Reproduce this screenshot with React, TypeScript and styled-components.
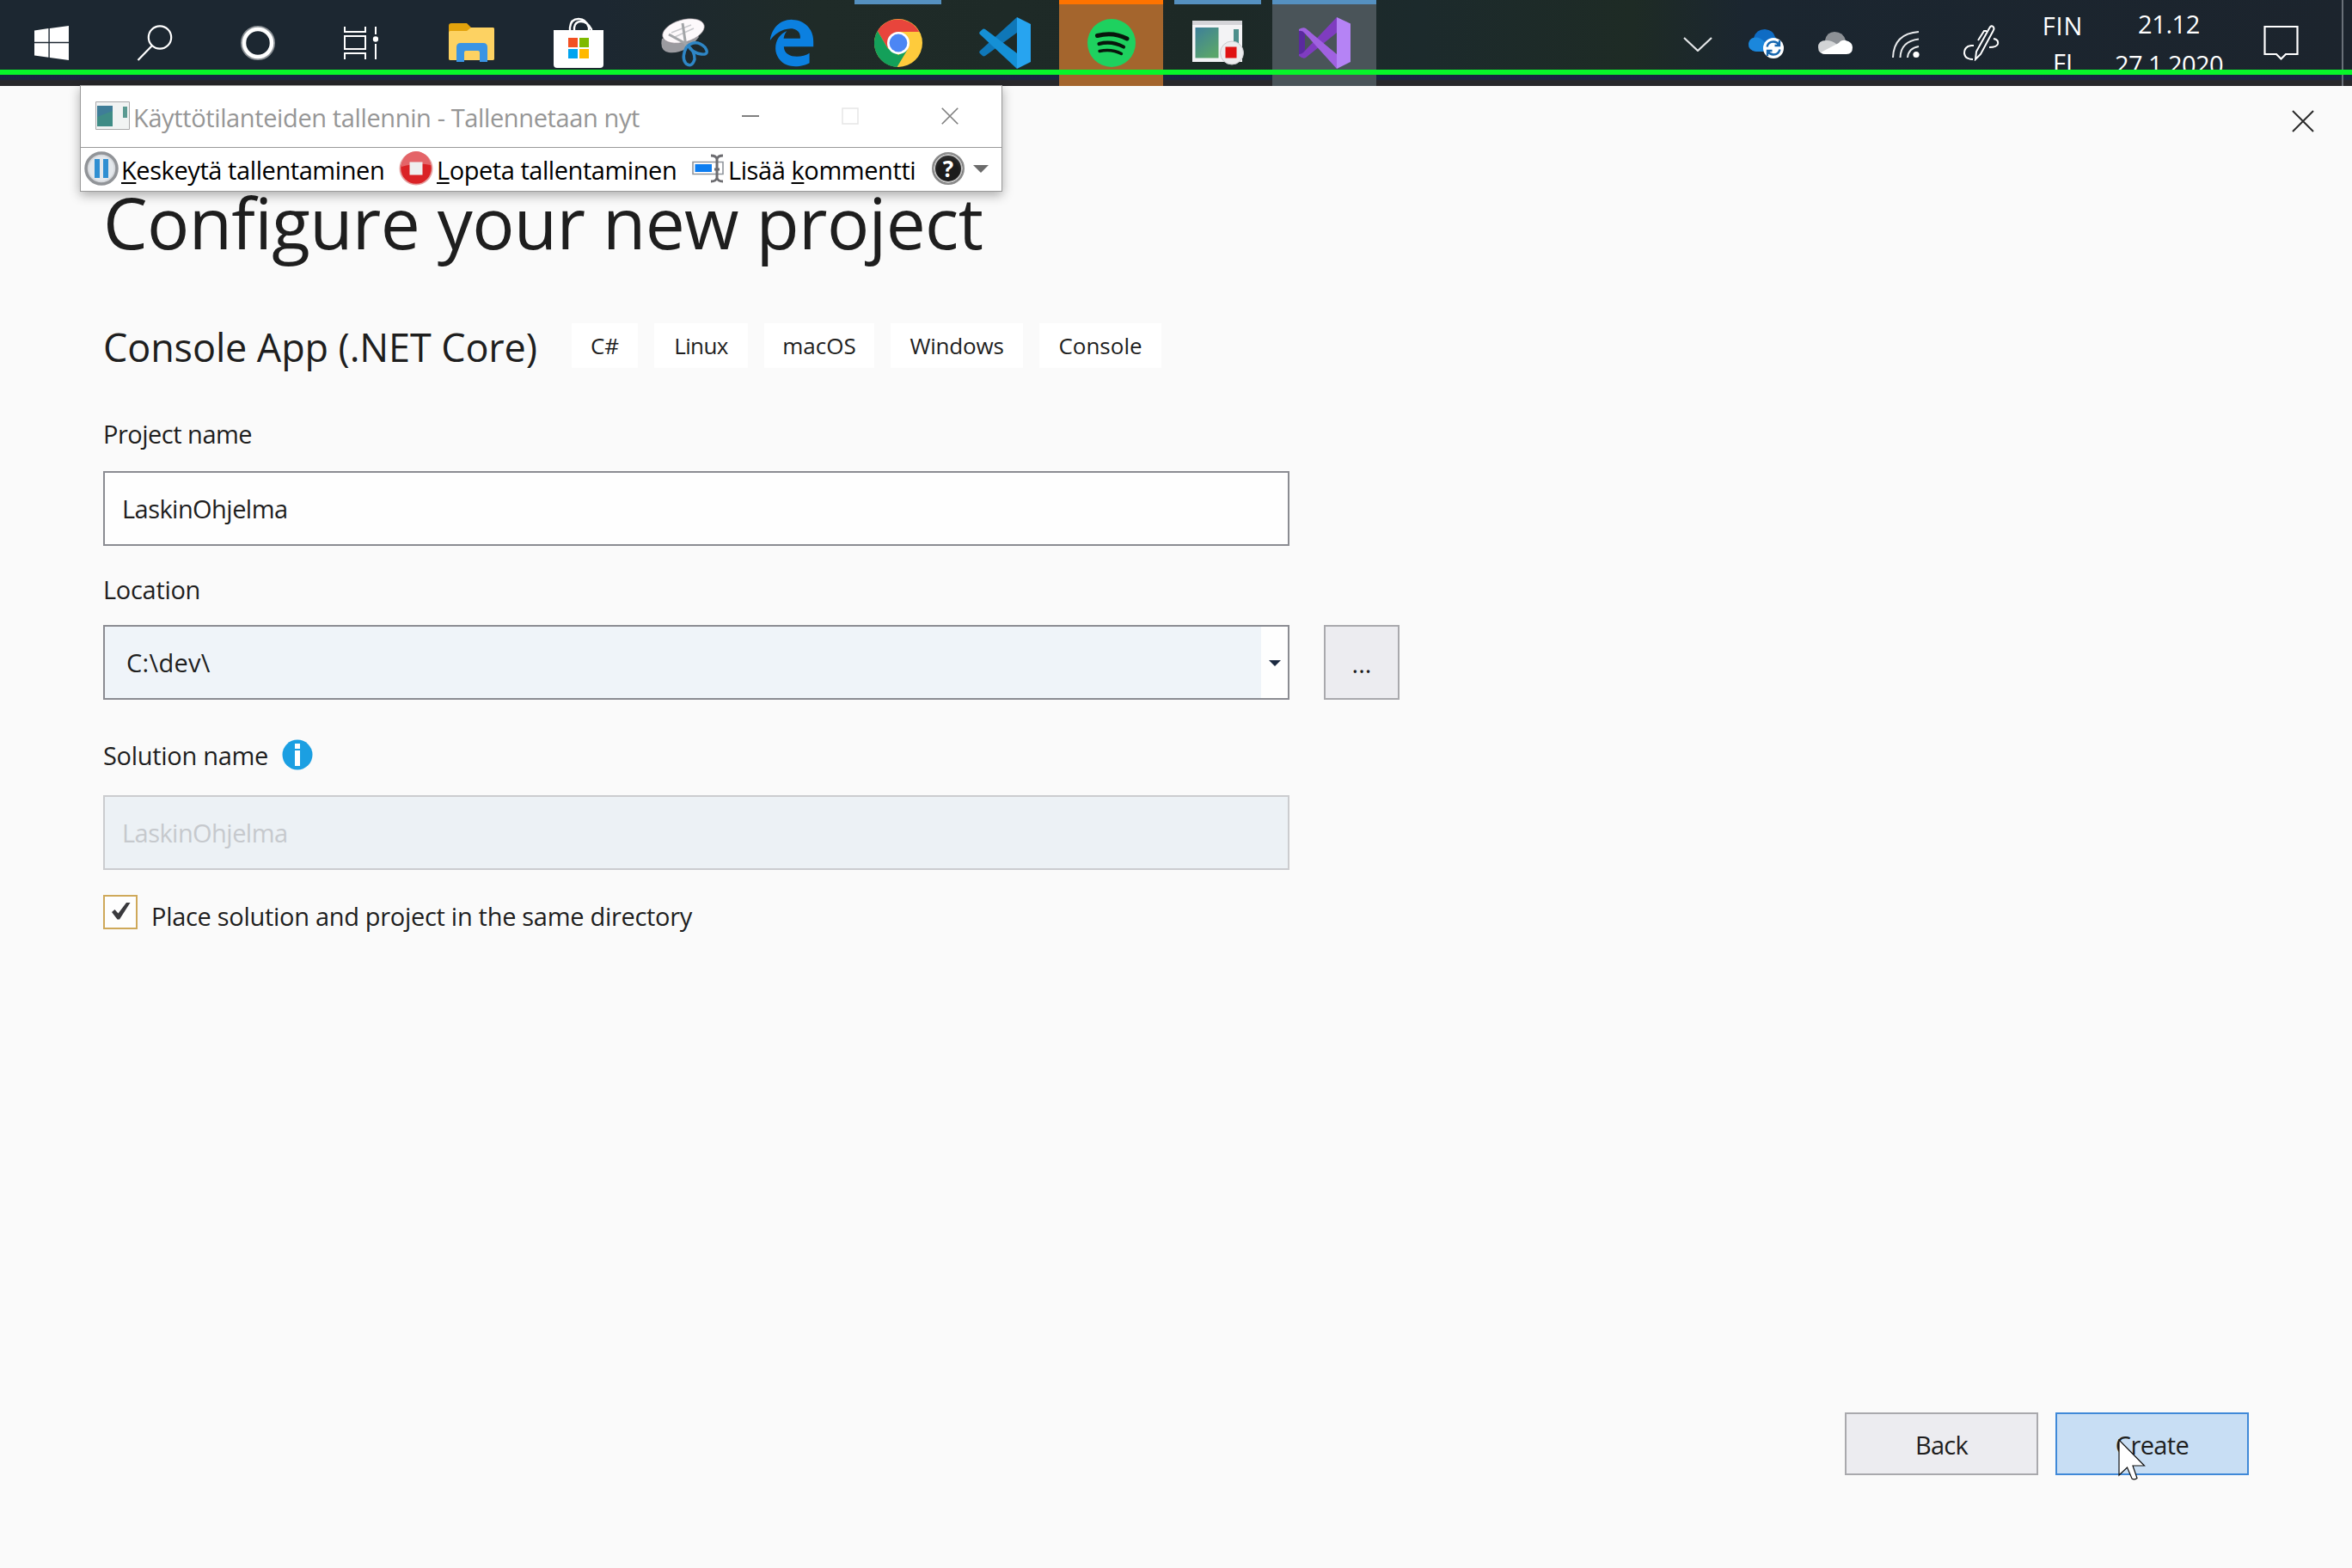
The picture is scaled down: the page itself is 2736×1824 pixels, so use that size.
import React from "react";
import styled, { createGlobalStyle } from "styled-components";
import { FaEdgeLegacy } from "react-icons/fa";

const Global = createGlobalStyle`
  * { box-sizing: border-box; }
  body { margin: 0; background: #fafafa; font-family: "Open Sans", "Noto Sans", sans-serif; }
  svg { display: block; flex: none; }
`;

const Screen = styled.div`
  position: relative;
  width: 2736px;
  height: 1824px;
  display: flex;
  flex-direction: column;
  overflow: hidden;
  background: #fafafa;
`;

const Txt = styled.span<{ $ls?: number }>`
  display: block;
  white-space: pre;
  letter-spacing: ${(p) => p.$ls ?? 0}px;
`;

/* ---------- Taskbar ---------- */

const Taskbar = styled.header`
  flex: none;
  height: 100px;
  display: flex;
  background:
    linear-gradient(180deg, transparent 87px, #1a2742 87px, #1b2640 92px, #27272a 94px),
    linear-gradient(90deg, #1c2731 0, #1c2731 700px, #1f2b28 950px, #1d2926 1400px, #1c2a2c 1650px, #1e2b25 1900px, #1b2630 2030px, #1c242d 100%);
`;

const SystemKeys = styled.div`
  display: flex;
  margin-right: 8px;
`;

const SystemKey = styled.div`
  width: 120px;
  height: 100px;
  display: flex;
  align-items: center;
  justify-content: center;
`;

const Apps = styled.div`
  display: flex;
  gap: 3px;
`;

const AppTile = styled.div<{ $bg?: string; $bar?: string; $inset?: number }>`
  width: 121px;
  height: 100px;
  display: flex;
  flex-direction: column;
  align-items: center;
  background: ${(p) => p.$bg ?? "transparent"};

  &::before {
    content: "";
    flex: none;
    height: 5px;
    width: ${(p) => 121 - 2 * (p.$inset ?? 0)}px;
    background: ${(p) => p.$bar ?? "transparent"};
  }
`;

const AppIcon = styled.div`
  height: 90px;
  display: flex;
  align-items: center;
`;

const Tray = styled.div`
  margin-left: auto;
  display: flex;
  height: 100px;
`;

const TrayItem = styled.div<{ $w: number }>`
  width: ${(p) => p.$w}px;
  display: flex;
  align-items: center;
  justify-content: center;
`;

const TrayText = styled.div<{ $w: number; $pitch: number; $top: number }>`
  width: ${(p) => p.$w}px;
  padding-top: ${(p) => p.$top}px;
  display: flex;
  flex-direction: column;
  align-items: center;
  font-size: 29px;
  line-height: ${(p) => p.$pitch}px;
  color: #fff;
`;

const ShowDesktop = styled.div`
  width: 12px;
  margin-left: 16px;
  border-left: 2px solid #6a7078;
`;

const CaptureEdge = styled.div`
  position: absolute;
  left: 0;
  right: 0;
  top: 81px;
  height: 6px;
  background: #07f52a;
  z-index: 3;
`;

const WindowsLogo = () => (
  <svg width="40" height="40" viewBox="0 0 40 40" fill="#fff">
    <path d="M0 5.4 16.4 3.1V18.8H0zM17.8 2.9 40 0V18.8H17.8zM0 20.2H16.4V36.8L0 34.6zM17.8 20.2H40V40L17.8 37z" />
  </svg>
);
const SearchIcon = () => (
  <svg width="42" height="42" viewBox="0 0 42 42" fill="none" stroke="#fff" strokeWidth="2.2">
    <circle cx="27" cy="14.5" r="13.2" />
    <path d="M18 24 1.5 41" />
  </svg>
);
const CortanaIcon = () => (
  <svg width="42" height="42" viewBox="0 0 42 42" fill="none">
    <circle cx="21" cy="21" r="18.5" stroke="#8b9196" strokeWidth="3" />
    <circle cx="21" cy="21" r="16" stroke="#fff" strokeWidth="4.5" />
  </svg>
);
const TaskViewIcon = () => (
  <svg width="40" height="40" viewBox="0 0 40 40" fill="none" stroke="#fff" strokeWidth="2">
    <path d="M1 1V7H25V1M1 39V32H25V39M1 12H25V27H1zM37 1V10M37 21V39" />
    <circle cx="37" cy="15.5" r="3.2" fill="#fff" stroke="none" />
  </svg>
);
const FolderIcon = () => (
  <svg width="54" height="46" viewBox="0 0 54 46">
    <path d="M0 3Q0 0 3 0H21L26 5H51Q53 5 53 7V41Q53 43 51 43H2Q0 43 0 41z" fill="#e2a20c" />
    <path d="M0 11Q0 9 2 9H21L26 5H51Q53 5 53 7V41Q53 43 51 43H2Q0 43 0 41z" fill="#fdd262" />
    <path d="M9 45V28Q9 23 14 23H40Q45 23 45 28V45H36V34Q36 32 34 32H20Q18 32 18 34V45z" fill="#3a94e4" />
  </svg>
);
const StoreIcon = () => (
  <svg width="58" height="60" viewBox="0 0 58 60">
    <path d="M19 16V12Q20 2 29 2T41 12V16M24 16V12Q25 5 32 5T44 14V16" fill="none" stroke="#fff" strokeWidth="2.4" />
    <path d="M0 15H58V55Q58 59 54 59H4Q0 59 0 55z" fill="#fff" />
    <path d="M17 24H28V35H17z" fill="#f25022" />
    <path d="M30 24H41V35H30z" fill="#7fba00" />
    <path d="M17 37H28V48H17z" fill="#00a4ef" />
    <path d="M30 37H41V48H30z" fill="#ffb900" />
  </svg>
);
const SnipIcon = () => (
  <svg width="58" height="58" viewBox="0 0 58 58">
    <path d="M2 24Q-1 38 10 40Q30 42 45 22L40 16z" fill="#9b9ba0" />
    <ellipse cx="27" cy="15" rx="25" ry="13" transform="rotate(-16 27 15)" fill="#fdf9fb" stroke="#8a8088" strokeWidth=".6" />
    <path d="M13 17 36 8M17 22 39 12" stroke="#c9c9cd" strokeWidth="1.4" />
    <path d="M26 6 30 33M10 19 32 31" stroke="#a3a5a8" strokeWidth="3" />
    <g fill="none" stroke="#2e86c6" strokeWidth="3.4">
      <path d="M31 33Q42 24 52 34Q58 43 48 42Q38 41 32 32" />
      <path d="M31 33Q24 46 30 53Q37 58 40 48Q40 38 32 32" />
    </g>
  </svg>
);
const ChromeIcon = () => (
  <svg width="56" height="56" viewBox="0 0 56 56">
    <circle cx="28" cy="28" r="28" fill="#fecb3c" />
    <path d="M3.8 13.9A28 28 0 0 1 52.2 15H28L15.5 34z" fill="#e8453c" />
    <path d="M3.8 13.9A28 28 0 0 0 26.5 56L38.5 36 28 42 15.5 34z" fill="#14a05a" />
    <circle cx="28" cy="28" r="13" fill="#fff" />
    <circle cx="28" cy="28" r="10.4" fill="#4c86f4" />
  </svg>
);
const CodeIcon = () => (
  <svg width="60" height="60" viewBox="0 0 60 60">
    <path d="M44 0V18L7 45Q5 46 3.5 44.5L.8 42Q-.5 40.5 1 39z" fill="#0f77b8" />
    <path d="M44 60V42L7 14Q5 13 3.5 14.5L.8 17Q-.5 18.5 1 20z" fill="#1590d6" />
    <path d="M44 0 60 8V52L44 60z" fill="#27a4f0" />
  </svg>
);
const SpotifyIcon = () => (
  <svg width="56" height="56" viewBox="0 0 56 56">
    <circle cx="28" cy="28" r="28" fill="#1ed15f" />
    <g fill="none" stroke="#08160c" strokeLinecap="round">
      <path d="M11.5 19.5Q30 14.5 46 23" strokeWidth="5" />
      <path d="M13.5 29Q28 25 42 32.5" strokeWidth="4.2" />
      <path d="M14 37.5Q28 34.5 39.5 40.5" strokeWidth="3.4" />
    </g>
  </svg>
);
const StepsIcon = () => (
  <svg width="60" height="52" viewBox="0 0 60 52">
    <defs>
      <linearGradient id="steps" x1="0" y1="0" x2=".6" y2="1">
        <stop offset="0" stopColor="#3d7f9a" />
        <stop offset="1" stopColor="#5aa56b" />
      </linearGradient>
    </defs>
    <path d="M0 0H58V48H0z" fill="#f3f3f5" />
    <path d="M0 0H58V5H0z" fill="#d4d4d8" />
    <path d="M3.5 8H30.5V43.5H3.5z" fill="url(#steps)" />
    <path d="M48 10H54V26H48z" fill="#4d8f8c" />
    <circle cx="46" cy="37.5" r="13.5" fill="#ececee" stroke="#c9c9cd" />
    <path d="M38.5 30.5H51.5V43.5H38.5z" fill="#e01212" />
  </svg>
);
const VisualStudioIcon = () => (
  <svg width="60" height="60" viewBox="0 0 60 60">
    <path d="M0 14 7 17V42L0 45z" fill="#5a2a9e" />
    <path d="M44 0V18L8 47Q5 49 0 45V43Q4 43 7 39z" fill="#7f3cc0" />
    <path d="M44 60V43L8 13Q5 11 0 14V16Q4 15 7 19z" fill="#a061e0" />
    <path d="M44 0 60 7.5V52L44 60z" fill="#b583f5" />
  </svg>
);
const ChevronDown = () => (
  <svg width="34" height="20" viewBox="0 0 34 20" fill="none" stroke="#e4e6e8" strokeWidth="2.2">
    <path d="M1 4 17 19 33 4" />
  </svg>
);
const OneDriveSync = () => (
  <svg width="42" height="36" viewBox="0 -2 42 36">
    <path d="M9 26Q0 25 0 17Q1 11 6 10Q9 0 19 0Q29 1 31 9Q36 13 33 22L30 26z" fill="#0f6cc4" />
    <path d="M9 26Q0 25 0 17Q1 11 6 10Q12 8 18 14L30 26z" fill="#1b87dc" />
    <circle cx="29" cy="22" r="12" fill="#fff" />
    <g fill="none" stroke="#1767b0" strokeWidth="2.4">
      <path d="M21.500 20.500Q23 14.500 29 14.500Q33 14.500 35.500 18M36 13V19H30.500" />
      <path d="M36.500 23.500Q35 29.500 29 29.500Q25 29.500 22.500 26M22 31V25H27.500" />
    </g>
  </svg>
);
const CloudIcon = () => (
  <svg width="40" height="26" viewBox="0 0 40 26">
    <path d="M8 10Q10 0 19 0Q29 0 32 10L20 16z" fill="#8d9196" />
    <path d="M9 26Q0 26 0 18Q0 10 9 10Q17 10 22 15L12 26z" fill="#d2d4d6" />
    <path d="M8 26Q5 26 3 24L24 13Q27 9 32 10Q40 12 40 18Q40 26 33 26z" fill="#fff" />
  </svg>
);
const WifiIcon = () => (
  <svg width="32" height="36" viewBox="0 -4 32 36" fill="none" stroke="#e8eaec" strokeWidth="2">
    <path d="M1 31Q2 3 31 1M9.500 31Q10 12 31 9.500M18 31Q19 20 31 18" />
    <circle cx="28" cy="27.5" r="3.6" fill="#fff" stroke="none" />
  </svg>
);
const PenIcon = () => (
  <svg width="42" height="42" viewBox="0 0 42 42" fill="none" stroke="#fff" strokeWidth="2">
    <path d="M14 40 15 31 30 4Q32 0 34.500 2Q36.500 4 34.500 7L20 34z" />
    <path d="M27 7H24L17 18M11 40Q2 40 1 33Q1 25 9 24H12M35 16Q41 17 40 22Q39 26 30 26" />
  </svg>
);
const NotificationIcon = () => (
  <svg width="41" height="42" viewBox="0 0 41 42" fill="none" stroke="#fff" strokeWidth="2.2">
    <path d="M1.500 2H39.500V34H26L20.500 39.500 15 34H1.500z" />
  </svg>
);

/* ---------- Recorder window ---------- */

const Recorder = styled.section`
  position: absolute;
  left: 93px;
  top: 99px;
  width: 1073px;
  height: 124px;
  display: flex;
  flex-direction: column;
  border: 1px solid #9a9a9a;
  background: #fff;
  box-shadow: 0 4px 12px rgba(0, 0, 0, 0.32);
  font-size: 29px;
  line-height: 40px;
  z-index: 2;
`;

const TitleBar = styled.div`
  flex: none;
  height: 72px;
  padding: 0 2px 2px 17px;
  display: flex;
  align-items: center;
  color: #969696;
  border-bottom: 1px solid #9a9a9a;

  > span { margin: 4px auto 0 4px; }
`;

const CaptionButton = styled.div`
  width: 116px;
  display: flex;
  justify-content: center;
`;

const ToolBar = styled.div`
  flex: 1;
  display: flex;
  align-items: center;
  padding: 0 0 2px 4px;
  color: #000;
`;

const ToolButton = styled.div<{ $w: number; $gap: number }>`
  width: ${(p) => p.$w}px;
  display: flex;
  align-items: center;
  gap: ${(p) => p.$gap}px;

  > span { margin-top: 3px; }
  u { text-decoration-thickness: 2px; text-underline-offset: 3px; }
`;

const WindowGlyph = () => (
  <svg width="40" height="33" viewBox="0 0 40 33">
    <path d="M.5 .5H39.500V32.500H.5z" fill="#f1f3f3" stroke="#a9a9ab" />
    <path d="M2 5H20V29H2z" fill="#3f8c86" />
    <path d="M2 5H20V11L2 18z" fill="#3f7d98" />
    <path d="M32 6H37V19H32z" fill="#5b9a92" />
  </svg>
);
const PauseIcon = () => (
  <svg width="40" height="40" viewBox="0 0 40 40">
    <circle cx="20" cy="20" r="18" fill="#d5d8dc" stroke="#919498" strokeWidth="3.5" />
    <circle cx="20" cy="20" r="14.5" fill="#e4e8ec" />
    <path d="M12 9H18V31H12zM22 9H28V31H22z" fill="#2f8fd2" />
  </svg>
);
const StopIcon = () => (
  <svg width="40" height="40" viewBox="0 0 40 40">
    <circle cx="20" cy="20" r="19.5" fill="#e4a0a0" />
    <circle cx="20" cy="20" r="17.8" fill="#da2226" />
    <path d="M3 18A17 17 0 0 1 37 16Q22 12 3 18z" fill="#e46468" />
    <path d="M12.500 12.500H27.500V27.500H12.500z" fill="#efefef" />
  </svg>
);
const CommentIcon = () => (
  <svg width="37" height="34" viewBox="0 0 37 34">
    <path d="M1 9.500H36V23.500H1z" fill="#fff" stroke="#8f959c" strokeWidth="1.6" />
    <path d="M3.500 12H23V21H3.500z" fill="#0c7df0" />
    <path d="M22 2Q28 2 29 6Q30 2 36 2M29 5V29M22 32Q28 32 29 28Q30 32 36 32M26 18H32" fill="none" stroke="#6c6c70" strokeWidth="3" />
  </svg>
);

const HelpBadge = styled.span`
  width: 38px;
  height: 38px;
  border-radius: 50%;
  border: 2px solid #8c8c8c;
  box-shadow: inset 0 0 0 2px #c4c4c4;
  background: radial-gradient(circle at 50% 60%, #1c1c1c 45%, #4a4a4a);
  color: #fff;
  font-size: 26px;
  font-weight: 700;
  line-height: 34px;
  text-align: center;
`;
const HelpArrow = styled.i`
  margin-left: 10px;
  border: 9px solid transparent;
  border-top-color: #6b6b6b;
  border-bottom: 0;
`;

/* ---------- Project dialog ---------- */

const Dialog = styled.main`
  flex: 1;
  display: flex;
  flex-direction: column;
  padding: 0 120px 108px;
  font-size: 29px;
  line-height: 40px;
  color: #1e1e1e;
`;

const DialogTop = styled.div`
  height: 108px;
  padding-top: 28px;
  margin-right: -76px;
  display: flex;
  justify-content: flex-end;
`;

const Heading = styled.h1`
  margin: 0 0 66px;
  font-size: 82px;
  font-weight: 400;
  line-height: 100px;
`;

const Template = styled.div`
  height: 60px;
  display: flex;
  align-items: flex-start;
`;

const TemplateName = styled.h2`
  margin: 0;
  width: 545px;
  font-size: 45px;
  font-weight: 400;
  line-height: 60px;
`;

const Tags = styled.div`
  margin-top: 2px;
  display: flex;
  gap: 19px;
`;

const Tag = styled.div<{ $w: number }>`
  width: ${(p) => p.$w}px;
  height: 52px;
  display: flex;
  justify-content: center;
  background: #fff;
  font-size: 26px;
  line-height: 52px;
`;

const FieldLabel = styled.label<{ $above: number; $below: number }>`
  display: flex;
  height: 40px;
  margin: ${(p) => p.$above}px 0 ${(p) => p.$below}px;
`;

const InfoBadge = styled.span`
  width: 36px;
  height: 36px;
  margin: 1px 0 0 16px;
`;

const FieldRow = styled.div`
  display: flex;
  gap: 40px;
`;

const Field = styled.div<{ $disabled?: boolean; $combo?: boolean }>`
  width: 1380px;
  height: 87px;
  padding-left: ${(p) => (p.$combo ? 25 : 20)}px;
  display: flex;
  align-items: center;
  border: 2px solid ${(p) => (p.$disabled ? "#cbcccf" : "#8b8c92")};
  background: ${(p) => (p.$disabled ? "#ecf1f5" : p.$combo ? "#eff4f9" : "#fefefe")};
  color: ${(p) => (p.$disabled ? "#c6c9cd" : "#1e1e1e")};
`;

const ComboButton = styled.div`
  margin-left: auto;
  width: 31px;
  height: 83px;
  display: flex;
  align-items: center;
  justify-content: center;
  background: #fefefe;
`;
const ComboArrow = styled.i`
  margin: 1px 0 0 1px;
  border: 7.5px solid transparent;
  border-top-color: #1a2940;
  border-bottom: 0;
`;

const Button = styled.button<{ $w: number; $h: number; $primary?: boolean }>`
  width: ${(p) => p.$w}px;
  height: ${(p) => p.$h}px;
  padding: 2px 0 0;
  display: flex;
  align-items: center;
  justify-content: center;
  border: 2px solid ${(p) => (p.$primary ? "#4089d8" : "#a9a9ad")};
  background: ${(p) => (p.$primary ? "#c8def4" : "#ececf0")};
  font: inherit;
  color: inherit;
`;

const CheckRow = styled.div`
  display: flex;
  margin-top: 29px;
  gap: 16px;

  > span { margin-top: 5px; }
`;

const CheckBox = styled.div`
  width: 40px;
  height: 40px;
  padding: 0 0 2px 1px;
  display: flex;
  align-items: center;
  justify-content: center;
  border: 2px solid #cfa95a;
  background: #fefefe;
`;

const Footer = styled.footer`
  margin-top: auto;
  display: flex;
  justify-content: flex-end;
  gap: 20px;
`;

const Pointer = styled.div`
  position: absolute;
  left: 2464px;
  top: 1674px;
  z-index: 4;
`;

const Cross = ({ size, color, w }: { size: number; color: string; w: number }) => (
  <svg width={size} height={size} viewBox="0 0 26 26" stroke={color} strokeWidth={w}>
    <path d="M1 1 25 25M25 1 1 25" />
  </svg>
);

const tags: [string, number, number][] = [
  ["C#", 77, 0],
  ["Linux", 109, -0.6],
  ["macOS", 128, 0],
  ["Windows", 154, -0.2],
  ["Console", 142, 0],
];

export default function App() {
  return (
    <Screen>
      <Global />
      <Taskbar>
        <SystemKeys>
          <SystemKey><WindowsLogo /></SystemKey>
          <SystemKey><SearchIcon /></SystemKey>
          <SystemKey><CortanaIcon /></SystemKey>
          <SystemKey><TaskViewIcon /></SystemKey>
        </SystemKeys>
        <Apps>
          <AppTile><AppIcon><FolderIcon /></AppIcon></AppTile>
          <AppTile><AppIcon><StoreIcon /></AppIcon></AppTile>
          <AppTile><AppIcon><SnipIcon /></AppIcon></AppTile>
          <AppTile><AppIcon><FaEdgeLegacy size={56} color="#0b80e0" /></AppIcon></AppTile>
          <AppTile $bar="#5590c0" $inset={10}><AppIcon><ChromeIcon /></AppIcon></AppTile>
          <AppTile><AppIcon><CodeIcon /></AppIcon></AppTile>
          <AppTile $bg="#a4652d" $bar="#ff7300"><AppIcon><SpotifyIcon /></AppIcon></AppTile>
          <AppTile $bar="#5590c0" $inset={10}><AppIcon><StepsIcon /></AppIcon></AppTile>
          <AppTile $bg="#4a5459" $bar="#5590c0"><AppIcon><VisualStudioIcon /></AppIcon></AppTile>
        </Apps>
        <Tray>
          <TrayItem $w={80}><ChevronDown /></TrayItem>
          <TrayItem $w={80}><OneDriveSync /></TrayItem>
          <TrayItem $w={80}><CloudIcon /></TrayItem>
          <TrayItem $w={84}><WifiIcon /></TrayItem>
          <TrayItem $w={92}><PenIcon /></TrayItem>
          <TrayText $w={97} $pitch={43} $top={8}>
            <Txt $ls={0.8}>FIN</Txt>
            <Txt>FI</Txt>
          </TrayText>
          <TrayText $w={150} $pitch={47} $top={4}>
            <Txt $ls={-0.4}>21.12</Txt>
            <Txt $ls={-0.6}>27.1.2020</Txt>
          </TrayText>
          <TrayItem $w={110}><NotificationIcon /></TrayItem>
          <ShowDesktop />
        </Tray>
      </Taskbar>
      <CaptureEdge />

      <Dialog>
        <DialogTop><Cross size={26} color="#2a2a2a" w={2} /></DialogTop>
        <Heading><Txt $ls={-0.65}>Configure your new project</Txt></Heading>
        <Template>
          <TemplateName><Txt $ls={-0.13}>Console App (.NET Core)</Txt></TemplateName>
          <Tags>
            {tags.map(([name, width, ls]) => (
              <Tag key={name} $w={width}><Txt $ls={ls}>{name}</Txt></Tag>
            ))}
          </Tags>
        </Template>

        <FieldLabel $above={51} $below={23}><Txt $ls={-0.5}>Project name</Txt></FieldLabel>
        <Field><Txt $ls={-0.55}>LaskinOhjelma</Txt></Field>

        <FieldLabel $above={31} $below={21}><Txt $ls={-0.3}>Location</Txt></FieldLabel>
        <FieldRow>
          <Field $combo>
            <Txt $ls={0.3}>C:\dev\</Txt>
            <ComboButton><ComboArrow /></ComboButton>
          </Field>
          <Button $w={88} $h={87}><Txt>...</Txt></Button>
        </FieldRow>

        <FieldLabel $above={45} $below={26}>
          <Txt $ls={-0.3}>Solution name</Txt>
          <InfoBadge>
            <svg width="36" height="36" viewBox="0 0 36 36">
              <circle cx="18" cy="18" r="17.5" fill="#1b9fe2" />
              <path d="M15 5H21V11H15zM15 13H21V31H15z" fill="#fff" />
            </svg>
          </InfoBadge>
        </FieldLabel>
        <Field $disabled><Txt $ls={-0.55}>LaskinOhjelma</Txt></Field>

        <CheckRow>
          <CheckBox>
            <svg width="22" height="22" viewBox="0 0 22 22">
              <path d="M0 12 3.500 9 7.500 13.500 17 1H21.500L9 20.500H6.500z" fill="#3a3a3e" />
            </svg>
          </CheckBox>
          <Txt $ls={-0.3}>Place solution and project in the same directory</Txt>
        </CheckRow>

        <Footer>
          <Button $w={225} $h={73}><Txt $ls={-0.7}>Back</Txt></Button>
          <Button $w={225} $h={73} $primary><Txt $ls={-0.6}>Create</Txt></Button>
        </Footer>
      </Dialog>

      <Recorder>
        <TitleBar>
          <WindowGlyph />
          <Txt $ls={-0.38}>Käyttötilanteiden tallennin - Tallennetaan nyt</Txt>
          <CaptionButton>
            <svg width="20" height="20" viewBox="0 0 20 20"><path d="M0 10H20" stroke="#808080" strokeWidth="2" /></svg>
          </CaptionButton>
          <CaptionButton>
            <svg width="20" height="20" viewBox="0 0 20 20"><path d="M1 1H19V19H1z" fill="none" stroke="#e6e6e6" strokeWidth="1.5" /></svg>
          </CaptionButton>
          <CaptionButton><Cross size={20} color="#808080" w={2.2} /></CaptionButton>
        </TitleBar>
        <ToolBar>
          <ToolButton $w={366} $gap={3}><PauseIcon /><Txt $ls={-0.42}><u>K</u>eskeytä tallentaminen</Txt></ToolButton>
          <ToolButton $w={341} $gap={4}><StopIcon /><Txt $ls={-0.45}><u>L</u>opeta tallentaminen</Txt></ToolButton>
          <ToolButton $w={279} $gap={5}><CommentIcon /><Txt $ls={-0.42}>Lisää <u>k</u>ommentti</Txt></ToolButton>
          <HelpBadge>?</HelpBadge>
          <HelpArrow />
        </ToolBar>
      </Recorder>

      <Pointer>
        <svg width="36" height="50" viewBox="0 0 36 50" fill="#fff" stroke="#111" strokeWidth="1.2">
          <path d="M1 1V42L10.500 33 16 46Q18.500 48 22 45.500L17 31H30.500z" />
        </svg>
      </Pointer>
    </Screen>
  );
}
